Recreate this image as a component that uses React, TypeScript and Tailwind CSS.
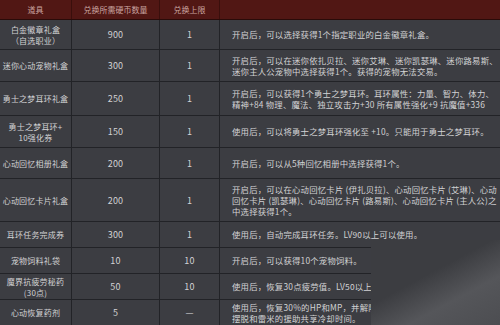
import React from 'react';

interface ItemRow {
  name: string[];
  coins: string;
  limit: string;
  desc: string[];
  height: string;
}

const rows: ItemRow[] = [
  {
    name: ['白金徽章礼盒', '（自选职业）'],
    coins: '900',
    limit: '1',
    desc: ['开启后，可以选择获得1个指定职业的白金徽章礼盒。'],
    height: 'h-[30px]',
  },
  {
    name: ['迷你心动宠物礼盒'],
    coins: '300',
    limit: '1',
    desc: [
      '开启后，可以在迷你依扎贝拉、迷你艾琳、迷你凯瑟琳、迷你路易斯、',
      '迷你主人公宠物中选择获得1个。获得的宠物无法交易。',
    ],
    height: 'h-[32px]',
  },
  {
    name: ['勇士之梦耳环礼盒'],
    coins: '250',
    limit: '1',
    desc: [
      '开启后，可以获得1个勇士之梦耳环。耳环属性：力量、智力、体力、',
      '精神+84 物理、魔法、独立攻击力+30  所有属性强化+9 抗魔值+336',
    ],
    height: 'h-[34px]',
  },
  {
    name: ['勇士之梦耳环+', '10强化券'],
    coins: '150',
    limit: '1',
    desc: ['使用后，可以将勇士之梦耳环强化至 +10。只能用于勇士之梦耳环。'],
    height: 'h-[32px]',
  },
  {
    name: ['心动回忆相册礼盒'],
    coins: '200',
    limit: '1',
    desc: ['开启后，可以从5种回忆相册中选择获得1个。'],
    height: 'h-[31px]',
  },
  {
    name: ['心动回忆卡片礼盒'],
    coins: '200',
    limit: '1',
    desc: [
      '开启后，可以在心动回忆卡片 (伊扎贝拉)、心动回忆卡片 (艾琳)、心动',
      '回忆卡片 (凯瑟琳)、心动回忆卡片 (路易斯)、心动回忆卡片 (主人公)之',
      '中选择获得1个。',
    ],
    height: 'h-[43px]',
  },
  {
    name: ['耳环任务完成券'],
    coins: '300',
    limit: '1',
    desc: ['使用后，自动完成耳环任务。LV90以上可以使用。'],
    height: 'h-[26px]',
  },
  {
    name: ['宠物饲料礼袋'],
    coins: '10',
    limit: '10',
    desc: ['开启后，可以获得10个宠物饲料。'],
    height: 'h-[26px]',
  },
  {
    name: ['魔界抗疲劳秘药', '(30点)'],
    coins: '50',
    limit: '10',
    desc: ['使用后，恢复30点疲劳值。LV50以上可以使用。'],
    height: 'h-[26px]',
  },
  {
    name: ['心动恢复药剂'],
    coins: '5',
    limit: '—',
    desc: ['使用后，恢复30%的HP和MP，并解除异常状态。', '摆脱和雷米的援助共享冷却时间。'],
    height: 'h-[26px]',
  },
];

const font = { fontFamily: '"Noto Sans CJK SC", "Noto Sans", sans-serif' };

export default function App() {
  return (
    <div
      className="relative w-[500px] h-[325px] overflow-hidden bg-[#3c3d42] text-[#d2d2d4]"
      style={font}
    >
      {/* Header */}
      <div className="grid grid-cols-[72px_88px_60px_1fr] h-[20px] bg-[#511714] border-b border-[#2a0b09] text-[8px] text-[#caa4a0]">
        <div className="flex items-center justify-center border-r border-[#3a0f0c]">道具</div>
        <div className="flex items-center justify-center border-r border-[#3a0f0c]">兑换所需硬币数量</div>
        <div className="flex items-center justify-center border-r border-[#3a0f0c]">兑换上限</div>
        <div></div>
      </div>

      {/* Body */}
      {rows.map((row, i) => (
        <div
          key={i}
          className={`grid grid-cols-[72px_88px_60px_1fr] ${row.height} border-b border-[#222327] text-[8px] leading-[11px] tracking-[0.2px]`}
        >
          <div className="flex flex-col items-center justify-center text-center border-r border-[#222327]">
            {row.name.map((n, j) => (
              <span key={j}>{n}</span>
            ))}
          </div>
          <div className="flex items-center justify-center border-r border-[#222327] text-[9px]">
            {row.coins}
          </div>
          <div className="flex items-center justify-center border-r border-[#222327] text-[9px]">
            {row.limit}
          </div>
          <div className="flex flex-col justify-center pl-[12px] whitespace-nowrap text-[8.4px]">
            {row.desc.map((d, j) => (
              <span key={j}>{d}</span>
            ))}
          </div>
        </div>
      ))}

      {/* Gray smear lying over the lower right corner */}
      <div className="absolute left-[371px] top-[240px] right-0 bottom-0 bg-[linear-gradient(152deg,#3c3d41_0%,#3c3d41_42%,#55565a_68%,#4c4d51_100%)]"></div>
    </div>
  );
}
